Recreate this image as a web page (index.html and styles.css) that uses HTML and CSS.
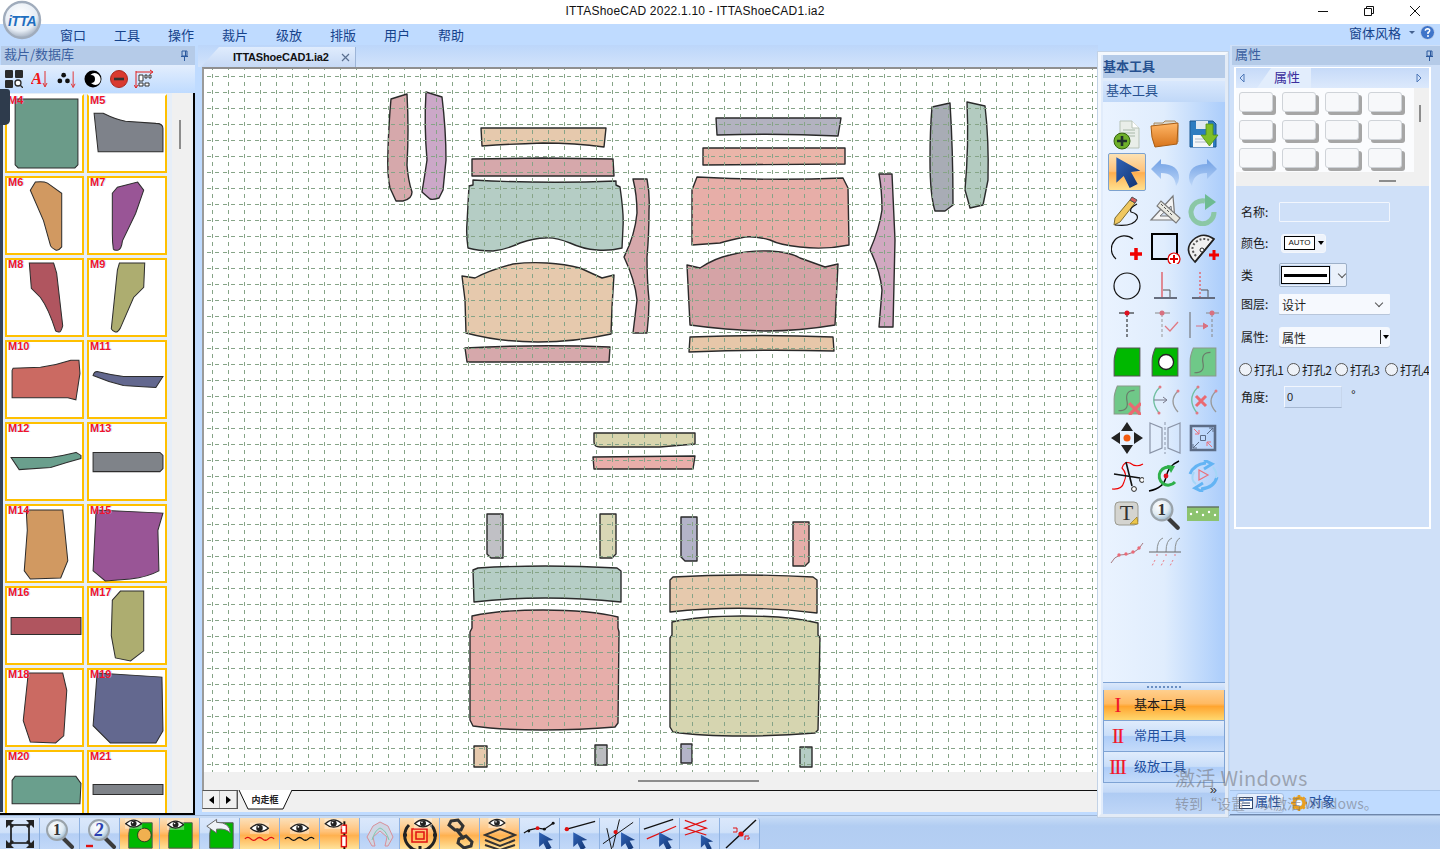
FILE: index.html
```html
<!DOCTYPE html>
<html lang="zh">
<head>
<meta charset="utf-8">
<title>ITTAShoeCAD</title>
<link rel="stylesheet" href="styles.css">
</head>
<body>
<svg class="defs" width="0" height="0">
  <defs>
    <linearGradient id="blueCur" x1="0" y1="0" x2="1" y2="1"><stop offset="0" stop-color="#2f63b8"/><stop offset="1" stop-color="#12336f"/></linearGradient>
    <radialGradient id="lens" cx=".4" cy=".35" r=".7"><stop offset="0" stop-color="#fff"/><stop offset=".6" stop-color="#dfeaf2"/><stop offset="1" stop-color="#8fb0c8"/></radialGradient>
    <radialGradient id="logoG" cx=".45" cy=".35" r=".7"><stop offset="0" stop-color="#fff"/><stop offset=".65" stop-color="#e6edf5"/><stop offset="1" stop-color="#8e9cb0"/></radialGradient>
    <linearGradient id="fold" x1="0" y1="0" x2="0" y2="1"><stop offset="0" stop-color="#ffb768"/><stop offset="1" stop-color="#d8741a"/></linearGradient>
    <linearGradient id="undoG" x1="0" y1="0" x2="0" y2="1"><stop offset="0" stop-color="#6f9fe4"/><stop offset="1" stop-color="#bcd6f8"/></linearGradient>
    <symbol id="eye" viewBox="0 0 24 14"><rect x="0" y="0" width="24" height="14" fill="#fff" opacity=".35"/><path d="M1 7Q12-3 23 7Q12 16 1 7Z" fill="#fff" stroke="#222" stroke-width="1.6"/><circle cx="12" cy="6.8" r="4" fill="#222"/><circle cx="10.6" cy="5.4" r="1.1" fill="#fff"/></symbol>
    <symbol id="cur" viewBox="0 0 20 24"><path d="M2 1V20L7.500 15 12 24 18 21 13 12 20 11Z" fill="url(#blueCur)"/></symbol>
    <symbol id="glass" viewBox="0 0 32 32"><path d="M19 20L28 29" stroke="#3b3b3b" stroke-width="4" stroke-linecap="round"/><circle cx="13" cy="12" r="10" fill="url(#lens)" stroke="#9aa3aa" stroke-width="2"/></symbol>
    <symbol id="gshape" viewBox="0 0 26 28"><path d="M4 1H25V27H1V13Q1 8 4 1Z" fill="#00b800" stroke="#555" stroke-width="1"/></symbol>
  </defs>
</svg>

<div class="app">
  <header class="titlebar">
    <div class="title">ITTAShoeCAD 2022.1.10 - ITTAShoeCAD1.ia2</div>
    <div class="winbtns">
      <svg width="12" height="12" viewBox="0 0 12 12"><path d="M1 6.500H11" stroke="#111"/></svg>
      <svg width="12" height="12" viewBox="0 0 12 12"><path d="M1.500 3.500H8.500V10.500H1.500ZM3.500 3.500V1.500H10.500V8.500H8.500" fill="none" stroke="#111"/></svg>
      <svg width="12" height="12" viewBox="0 0 12 12"><path d="M1 1L11 11M11 1L1 11" stroke="#111"/></svg>
    </div>
  </header>

  <nav class="menubar">
    <span>窗口</span><span>工具</span><span>操作</span><span>裁片</span><span>级放</span><span>排版</span><span>用户</span><span>帮助</span>
    <div class="menuright">
      <em>窗体风格</em><i class="caret"></i>
      <svg class="helpicon" width="15" height="15" viewBox="0 0 15 15"><circle cx="7.500" cy="7.500" r="7" fill="#3f74c9" stroke="#c9d8ee"/><path d="M5.300 5.800Q5.500 3.700 7.600 3.700Q9.800 3.800 9.700 5.600Q9.600 6.800 8 7.500V9" fill="none" stroke="#fff" stroke-width="1.500"/><circle cx="8" cy="11" r="1" fill="#fff"/></svg>
    </div>
  </nav>

  <main class="workspace">
    <aside class="left">
      <div class="panelhead"><span>裁片/数据库</span>
        <svg class="pin" width="9" height="11" viewBox="0 0 9 11"><path d="M2 1H7V6H2ZM1 6.500H8M4.500 7V11M5.500 1V6" fill="none" stroke="#2d5a9e"/></svg>
      </div>
      <div class="lefttools">
        <svg width="18" height="18" viewBox="0 0 18 18"><rect x="0" y="0" width="8" height="8" rx="1" fill="#2b2b2b"/><rect x="10" y="0" width="8" height="8" rx="1" fill="#2b2b2b"/><rect x="0" y="10" width="8" height="8" rx="1" fill="#2b2b2b"/><circle cx="13" cy="13" r="3" fill="#fff" stroke="#2b2b2b" stroke-width="1.300"/><path d="M15 15L18 18" stroke="#2b2b2b" stroke-width="1.300"/></svg>
        <svg width="18" height="18" viewBox="0 0 18 18"><text x="0" y="14" class="redA">A</text><path d="M14 1V16M12 13L14 17L16 13" fill="none" stroke="#e03030"/></svg>
        <svg width="19" height="18" viewBox="0 0 20 18"><circle cx="7" cy="5" r="2.500" fill="#111"/><circle cx="3" cy="11" r="2.500" fill="#111"/><circle cx="11" cy="11" r="2.500" fill="#111"/><path d="M17 1V17M15 14L17 18L19 14" fill="none" stroke="#e03030"/></svg>
        <svg width="18" height="18" viewBox="0 0 18 18"><circle cx="9" cy="9" r="8.500" fill="#000"/><ellipse cx="11" cy="9" rx="5.500" ry="6" fill="#fff" transform="rotate(-25 11 9)"/><circle cx="7" cy="9" r="4" fill="#000"/></svg>
        <svg width="18" height="18" viewBox="0 0 18 18"><circle cx="9" cy="9" r="8.500" fill="#d93a30" stroke="#a92a22"/><path d="M4 9H14" stroke="#333" stroke-width="2.600"/></svg>
        <svg class="lastool" width="20" height="20" viewBox="0 0 20 20"><path d="M2 3H18M16 1L19 3L16 5M2 2V19M0 16L2 19L4 16" fill="none" stroke="#e02020"/><path d="M5 6H9V12H5ZM11 6H13V9H11ZM15 6H17V9H15ZM5 14H9V17H5ZM11 14H15V17H11Z" fill="#fff" stroke="#333"/></svg>
      </div>
      <div class="listwrap">
        <div class="thumbs">
          <div class="thumb first"><b>M4</b><svg viewBox="0 0 78 78"><path class="sh" fill="#6b9b89" d="M10 5H72V70L69 73H13L10 70Z"/></svg></div>
          <div class="thumb first"><b>M5</b><svg viewBox="0 0 78 78"><path class="sh" fill="#7e828a" d="M7 19H16Q28 25 38 27L68 29Q75 29 75 34V57H11Z"/></svg></div>
          <div class="thumb"><b>M6</b><svg viewBox="0 0 78 78"><path class="sh" fill="#d19961" d="M25 14L30 6Q38 5 42 7L56 17V70Q53 74 50 73Q46 71 45 69L38 44Z"/></svg></div>
          <div class="thumb"><b>M7</b><svg viewBox="0 0 78 78"><path class="sh" fill="#995596" d="M25 17L30 11L50 6L56 14L48 37L35 64Q34 72 31 73Q27 74 26 72Q25 65 25 57Z"/></svg></div>
          <div class="thumb"><b>M8</b><svg viewBox="0 0 78 78"><path class="sh" fill="#b0555f" d="M24 5H48L51 15L57 67Q55 74 53 73Q51 73 50 72Q43 50 35 39L26 30Z"/></svg></div>
          <div class="thumb"><b>M9</b><svg viewBox="0 0 78 78"><path class="sh" fill="#adad70" d="M32 5H57L56 29L46 39L33 69Q30 74 28 73Q25 72 24 70L30 12Z"/></svg></div>
          <div class="thumb"><b>M10</b><svg viewBox="0 0 78 78"><path class="sh" fill="#cb6a62" d="M7 30L8 28L35 27Q50 25 65 20H73L74 33L70 59L62 57H7Z"/></svg></div>
          <div class="thumb"><b>M11</b><svg viewBox="0 0 78 78"><path class="sh" fill="#63688f" d="M6 35Q7 31 10 31Q22 34 36 36L75 36L68 47Q50 46 36 45Q20 41 6 35Z"/></svg></div>
          <div class="thumb"><b>M12</b><svg viewBox="0 0 78 78"><path class="sh" fill="#6a9f8d" d="M6 35H45Q58 33 70 30L75 33V36Q60 40 45 45L14 47Z"/></svg></div>
          <div class="thumb"><b>M13</b><svg viewBox="0 0 78 78"><path class="sh" fill="#7f8389" d="M6 30H72L75 33V46L72 49H6Z"/></svg></div>
          <div class="thumb"><b>M14</b><svg viewBox="0 0 78 78"><path class="sh" fill="#d19961" d="M21 6H57L62 56L55 73L25 74L19 66L22 26Z"/></svg></div>
          <div class="thumb"><b>M15</b><svg viewBox="0 0 78 78"><path class="sh" fill="#995596" d="M9 6L75 9L70 26L71 66Q60 72 43 74L18 76L6 66Z"/></svg></div>
          <div class="thumb"><b>M16</b><svg viewBox="0 0 78 78"><path class="sh" fill="#b0555f" d="M6 31H75V48H6Z"/></svg></div>
          <div class="thumb"><b>M17</b><svg viewBox="0 0 78 78"><path class="sh" fill="#adad70" d="M25 14L33 5H56V64L43 74L28 71L24 49Z"/></svg></div>
          <div class="thumb"><b>M18</b><svg viewBox="0 0 78 78"><path class="sh" fill="#cb6a62" d="M23 5H57L61 22L58 67L50 74L25 73L18 52Z"/></svg></div>
          <div class="thumb"><b>M19</b><svg viewBox="0 0 78 78"><path class="sh" fill="#63688f" d="M10 5L74 9L75 62L68 74H23L6 57Z"/></svg></div>
          <div class="thumb"><b>M20</b><svg viewBox="0 0 78 78"><path class="sh" fill="#6a9f8d" d="M7 30L10 26H70L75 33L74 53H7Z"/></svg></div>
          <div class="thumb"><b>M21</b><svg viewBox="0 0 78 78"><path class="sh" fill="#7f8389" d="M6 34H75V44H6Z"/></svg></div>
        </div>
        <div class="vscroll"><i></i></div>
      </div>
    </aside>

    <section class="doc">
      <div class="tabstrip">
        <div class="doctab"><span>ITTAShoeCAD1.ia2</span>
          <svg width="9" height="9" viewBox="0 0 9 9"><path d="M1 1L8 8M8 1L1 8" stroke="#5a6f90" stroke-width="1.200"/></svg>
        </div>
      </div>
      <div class="frame">
        <svg class="canvas" width="894" height="703" viewBox="204 69 894 703">
          <defs>
            <pattern id="grid" x="212" y="76" width="16" height="16" patternUnits="userSpaceOnUse">
              <path d="M.5 0V2M.5 6V10M.5 14V16" stroke="#86a487" fill="none"/>
              <path d="M3 .5H7M11 .5H15" stroke="#86a487" fill="none"/>
            </pattern>
          </defs>
          <rect x="204" y="69" width="894" height="703" fill="#fff"/>
          <g class="pc">
            <path fill="#d6a8ab" d="M391 99L407 94Q409 130 407 165Q408 180 412 192Q412 199 403 201H396L390 188Q387 175 388 150Q389 120 391 99Z"/>
            <path fill="#cba8c8" d="M426 92L442 97Q446 130 446 160L443 190L439 198Q433 200 430 199L422 192Q424 180 427 160Q424 125 426 92Z"/>
            <path fill="#e6c9ad" d="M481 128H606L604 147Q575 143 543 143Q510 144 482 146Z"/>
            <path fill="#d6a8ab" d="M472 159L543 158L613 159L614 176H472Z"/>
            <path fill="#b5cdc5" d="M473 180Q545 184 616 181V185L620 187Q624 215 623 227L622 248Q610 251 597 250Q583 249 570 243Q555 237 545 238Q535 238 520 243Q505 250 493 251Q478 251 468 248Q466 235 467 223L469 186L473 185Z"/>
            <path fill="#e6c9ad" d="M462 276L475 278Q490 270 513 264Q530 262 547 263Q565 264 580 268L602 278L614 275L612 307L611 334Q575 342 538 342Q500 342 466 333L465 300Z"/>
            <path fill="#d6a8ab" d="M465 348Q538 344 610 347L609 362H467Z"/>
            <path fill="#d6a8ab" d="M633 179H647Q650 195 649 210Q649 235 647 257Q647 280 649 300Q649 316 647 333H633L637 300Q635 280 624 257Q635 235 637 213Q637 195 633 179Z"/>
            <path fill="#b3b2c0" d="M716 118H841L838 136Q778 133 717 135Z"/>
            <path fill="#eab5a9" d="M703 148H845V164L703 165Z"/>
            <path fill="#e7aea8" d="M697 177Q770 181 843 178L848 188L849 245Q825 250 800 247Q780 245 770 240Q755 236 745 237Q730 240 720 243L692 245V190Z"/>
            <path fill="#d5a3a6" d="M687 265L700 268Q715 258 730 255Q750 250 770 251Q790 252 800 258L825 267L838 264L835 325Q800 331 765 331Q725 330 690 325Z"/>
            <path fill="#e7c7a9" d="M690 337Q762 334 833 337L834 351Q760 349 689 352Z"/>
            <path fill="#d0a8c0" d="M879 174H892L895 240L893 327H879L882 290Q880 270 870 250Q879 230 882 210Q882 190 879 174Z"/>
            <path fill="#a8acb5" d="M932 107L950 103Q953 150 953 205L945 211H935Q930 195 930 160Q930 130 932 107Z"/>
            <path fill="#b3cbc0" d="M967 102L985 106Q989 140 988 180L983 205L970 208Q968 200 965 190Q969 145 967 102Z"/>
            <path fill="#d9d5ae" d="M594 433H695V444L660 447H600Q594 447 594 442Z"/>
            <path fill="#e9aeaa" d="M593 457L695 456L693 469H594Z"/>
            <path fill="#c0c0c5" d="M487 514H503V558H491L487 554Z"/>
            <path fill="#d9d7b5" d="M600 514H616V554L612 558H600Z"/>
            <path fill="#b3b3c8" d="M681 517H697V561H685L681 557Z"/>
            <path fill="#e6aeaa" d="M793 522H809V562L805 566H793Z"/>
            <path fill="#b5cdc5" d="M473 570L478 568Q543 564 617 568L621 571V602Q543 594 474 602Z"/>
            <path fill="#e6aeaa" d="M472 616Q500 610 543 610Q590 610 618 617V628L619 632L618 723L615 727Q580 730 543 730Q500 730 473 726L470 720V632L472 628Z"/>
            <path fill="#e6c9ad" d="M670 580L673 577Q743 573 813 577L817 580V613Q743 604 670 612Z"/>
            <path fill="#d6d5b0" d="M672 622Q700 616 743 616Q790 616 818 623V635L820 638L818 730L815 733Q780 736 743 736Q700 736 673 732L670 727V638L672 635Z"/>
            <path fill="#e6c9ad" d="M474 746H487V767H474Z"/>
            <path fill="#bbbcc0" d="M595 745H607V765H595Z"/>
            <path fill="#b3b3c8" d="M681 744H692V763H681Z"/>
            <path fill="#b5cdc5" d="M800 747H812V767H800Z"/>
          </g>
          <rect x="204" y="69" width="894" height="703" fill="url(#grid)"/>
        </svg>
        <div class="hstrip"><i></i></div>
      </div>
      <div class="sheetrow">
        <div class="navbtns">
          <button class="nav"><i class="tri-l"></i></button>
          <button class="nav"><i class="tri-r"></i></button>
        </div>
        <div class="sheettab">
          <svg class="tabshape" width="54" height="20" viewBox="0 0 54 20"><path d="M1 0L10 19H45L54 0" fill="#fff" stroke="#111"/></svg>
          <span>内走框</span>
        </div>
        <div class="sheetline"></div>
      </div>
    </section>

    <aside class="tools">
      <div class="toolhead">基本工具</div>
      <div class="toolsub">基本工具</div>
      <div class="toolgrid">
        <!-- row 1 -->
        <div class="tc"><svg width="32" height="32" viewBox="0 0 32 32"><path d="M9 3H21L28 10V30H9Z" fill="#e9eee9" stroke="#b7c3b7"/><path d="M21 3V10H28" fill="#fff" stroke="#b7c3b7"/><path d="M12 12H24M12 15H24M15 18H24" stroke="#a8b8a8"/><circle cx="11" cy="23" r="8" fill="#6fb02a" stroke="#34620f"/><path d="M11 18V28M6 23H16" stroke="#20302a" stroke-width="2.600"/></svg></div>
        <div class="tc"><svg width="32" height="32" viewBox="0 0 32 32"><path d="M5 5H14L16 3H26L29 7V24H5Z" fill="#d8d8d0" stroke="#a98a60"/><path d="M2 8L29 5L28 26L6 29Q2 20 2 8Z" fill="url(#fold)" stroke="#a85d16"/></svg></div>
        <div class="tc"><svg width="32" height="32" viewBox="0 0 32 32"><path d="M3 3H26L29 6V29H3Z" fill="#2d7cc0" stroke="#1b578f"/><path d="M9 3H21V11H9Z" fill="#dfe8f2"/><path d="M6 17H26V29H6Z" fill="#f4f6f8"/><path d="M8 21H24M8 24H24" stroke="#b0bcc8"/><path d="M19 6H26V17H31L22.500 28L14 17H19Z" fill="#7fbf28" stroke="#4e8f15" stroke-width=".8"/></svg></div>
        <!-- row 2 -->
        <div class="tc sel"><svg width="28" height="32" viewBox="0 0 20 24"><use href="#cur"/></svg></div>
        <div class="tc"><svg width="32" height="32" viewBox="0 0 32 32"><path d="M2 13L12 3V8Q30 8 30 22Q30 26 27 30Q26 17 12 17V23Z" fill="url(#undoG)"/></svg></div>
        <div class="tc"><svg width="32" height="32" viewBox="0 0 32 32"><path d="M30 13L20 3V8Q2 8 2 22Q2 26 5 30Q6 17 20 17V23Z" fill="url(#undoG)"/></svg></div>
        <!-- row 3 -->
        <div class="tc"><svg width="32" height="32" viewBox="0 0 32 32"><path d="M19 6L24 9L9 28L3 31L4 24Z" fill="#f0c860" stroke="#7a6a30"/><path d="M19 6L24 9L26 6L21 3Z" fill="#d85a5a" stroke="#555"/><path d="M4 31Q22 33 26 25Q28 20 20 18Q18 14 26 10" fill="none" stroke="#111" stroke-width="1.200"/></svg></div>
        <div class="tc"><svg width="32" height="32" viewBox="0 0 32 32"><path d="M24 2L26 26H2Z" fill="#f4f4f4" stroke="#777" stroke-width="1.200"/><path d="M22 12L23 22H11Z" fill="#d6e4f6" stroke="#777"/><path d="M8 12L12 7L31 24L27 29Z" fill="#e8e8e0" stroke="#777" stroke-width="1.200"/><path d="M12 10L14 12M15 13L17 15M18 16L20 18M21 19L23 21" stroke="#555"/></svg></div>
        <div class="tc"><svg width="32" height="32" viewBox="0 0 32 32"><path d="M18 7A11.500 11.500 0 1 0 27 18" fill="none" stroke="#8bc7a6" stroke-width="5"/><path d="M18 0L29 8L18 16Z" fill="#6dbb92"/></svg></div>
        <!-- row 4 -->
        <div class="tc"><svg width="32" height="32" viewBox="0 0 32 32"><path d="M7 27A12 12 0 1 1 24 7" fill="none" stroke="#111" stroke-width="1.200" transform="translate(-2 0)"/><path d="M19 22H31M25 16V28" stroke="#f00000" stroke-width="3.500"/></svg></div>
        <div class="tc"><svg width="32" height="32" viewBox="0 0 32 32"><path d="M3 2H28V27H3Z" fill="none" stroke="#000" stroke-width="2"/><circle cx="25" cy="27" r="6" fill="#fff" stroke="#e00000" stroke-width="1.200"/><path d="M25 23V31M21 27H29" stroke="#e00000" stroke-width="2"/></svg></div>
        <div class="tc"><svg width="32" height="32" viewBox="0 0 32 32"><path d="M8 30Q-4 18 6 8Q16-1 27 7Z" fill="#f0f0f0" stroke="#222" stroke-width="1.600"/><path d="M8 30L27 7" stroke="#222" stroke-width="1.600"/><path d="M9 24Q2 16 9 10Q15 5 22 8" fill="none" stroke="#555" stroke-dasharray="2 2" stroke-width="2"/><circle cx="15" cy="18" r="2" fill="#fff" stroke="#222"/><path d="M22 23H33M27 18V28" stroke="#f00000" stroke-width="3"/></svg></div>
        <!-- row 5 -->
        <div class="tc"><svg width="32" height="32" viewBox="0 0 32 32"><circle cx="16" cy="16" r="13" fill="none" stroke="#111" stroke-width="1.200"/></svg></div>
        <div class="tc"><svg width="32" height="32" viewBox="0 0 32 32"><path d="M13 2V27" stroke="#e0707a" stroke-width="1.600"/><path d="M5 28H28" stroke="#5a5f70" stroke-width="1.800"/><path d="M14 20H21V27" fill="none" stroke="#555"/></svg></div>
        <div class="tc"><svg width="32" height="32" viewBox="0 0 32 32"><path d="M13 2V27" stroke="#e0707a" stroke-width="1.600" stroke-dasharray="2 2"/><path d="M5 28H28" stroke="#5a5f70" stroke-width="1.800"/><path d="M14 20H21V27" fill="none" stroke="#555"/></svg></div>
        <!-- row 6 -->
        <div class="tc"><svg width="32" height="32" viewBox="0 0 32 32"><path d="M8 5H23" stroke="#111"/><path d="M16 6V30" stroke="#111" stroke-dasharray="3 2"/><circle cx="16" cy="5" r="2.500" fill="#e01020"/></svg></div>
        <div class="tc"><svg width="32" height="32" viewBox="0 0 32 32"><path d="M6 5H21" stroke="#888"/><path d="M13 6V30" stroke="#999" stroke-dasharray="3 2"/><circle cx="13" cy="5" r="2.500" fill="#d87080"/><path d="M16 18L21 23L29 14" fill="none" stroke="#e07a84" stroke-width="1.300"/></svg></div>
        <div class="tc"><svg width="32" height="32" viewBox="0 0 32 32"><path d="M3 4V30" stroke="#666"/><path d="M19 5H32" stroke="#888"/><path d="M25 6V30" stroke="#888" stroke-dasharray="3 2"/><circle cx="25" cy="5" r="2.500" fill="#d87080"/><path d="M9 18H20M16 15L21 18L16 21" fill="#d87080" stroke="#d87080"/></svg></div>
        <!-- row 7 -->
        <div class="tc"><svg width="28" height="30" viewBox="0 0 26 28"><use href="#gshape"/></svg></div>
        <div class="tc"><svg width="28" height="30" viewBox="0 0 26 28"><use href="#gshape"/><circle cx="14" cy="14" r="7" fill="#fff" stroke="#222" stroke-width="1.200"/></svg></div>
        <div class="tc"><svg width="28" height="30" viewBox="0 0 26 28"><path d="M4 1H25V27H1V13Q1 8 4 1Z" fill="#6fc888" stroke="#8a9a8a"/><path d="M5 24Q15 24 13 15Q11 5 20 5" fill="none" stroke="#6a7a6a" stroke-width="1.100"/></svg></div>
        <!-- row 8 -->
        <div class="tc"><svg width="28" height="30" viewBox="0 0 26 28"><path d="M4 1H25V27H1V13Q1 8 4 1Z" fill="#6fc888" stroke="#8a9a8a"/><path d="M5 24Q15 24 13 15Q11 5 20 5" fill="none" stroke="#6a7a6a" stroke-width="1.100"/><path d="M15 17L26 28M26 17L15 28" stroke="#ea6a72" stroke-width="3"/></svg></div>
        <div class="tc"><svg width="32" height="32" viewBox="0 0 32 32"><path d="M11 3Q-1 15 10 29" fill="none" stroke="#70bfa0" stroke-width="1.300"/><path d="M29 7Q19 17 29 28" fill="none" stroke="#999" stroke-width="1.300"/><circle cx="11" cy="3" r="1.500" fill="#e07a84"/><circle cx="10" cy="29" r="1.500" fill="#e07a84"/><circle cx="29" cy="7" r="1.500" fill="#e07a84"/><path d="M5 16H17M14 13L18 16L14 19" fill="none" stroke="#778"/></svg></div>
        <div class="tc"><svg width="32" height="32" viewBox="0 0 32 32"><path d="M11 3Q-1 15 10 29" fill="none" stroke="#70bfa0" stroke-width="1.300"/><path d="M29 7Q19 17 29 28" fill="none" stroke="#999" stroke-width="1.300"/><circle cx="11" cy="3" r="1.500" fill="#e07a84"/><circle cx="10" cy="29" r="1.500" fill="#e07a84"/><circle cx="29" cy="7" r="1.500" fill="#e07a84"/><path d="M9 12L19 22M19 12L9 22" stroke="#ea6a72" stroke-width="3"/></svg></div>
        <!-- row 9 -->
        <div class="tc"><svg width="32" height="32" viewBox="0 0 32 32"><path d="M16 0L22 9H10ZM16 32L22 23H10ZM0 16L9 10V22ZM32 16L23 10V22Z" fill="#222"/><circle cx="16" cy="16" r="3.500" fill="#f25a10"/></svg></div>
        <div class="tc"><svg width="32" height="32" viewBox="0 0 32 32"><path d="M1 1L13 6V26L1 31ZM31 1L19 6V26L31 31Z" fill="none" stroke="#8b95a8" stroke-width="1.200"/><path d="M16 0V32" stroke="#8b95a8" stroke-dasharray="3 2"/></svg></div>
        <div class="tc"><svg width="32" height="32" viewBox="0 0 32 32"><path d="M4 4H28V28H4Z" fill="none" stroke="#5c6c86" stroke-width="2.600"/><path d="M13.500 13.500H18.500V18.500H13.500Z" fill="none" stroke="#5c6c86"/><path d="M20 12L26 6M22 6H26V10M12 20L6 26M6 22V26H10" fill="none" stroke="#5c6c86"/><path d="M12 12L7 7M12 8V12H8M20 20L25 25M20 24V20H24" fill="none" stroke="#e9717c"/></svg></div>
        <!-- row 10 -->
        <div class="tc"><svg width="34" height="32" viewBox="0 0 34 32"><path d="M2 29Q12 30 14 22Q18 14 12 8Q14 1 20 3Q26 8 33 4" fill="none" stroke="#ee0000" stroke-width="1.100"/><path d="M16 2L22 26M30 18L4 14" stroke="#111" stroke-width="1.600"/><circle cx="24" cy="29" r="2.400" fill="#fff" stroke="#222"/><circle cx="32" cy="20" r="2.400" fill="#fff" stroke="#222"/></svg></div>
        <div class="tc"><svg width="34" height="32" viewBox="0 0 34 32"><path d="M1 31Q16 28 18 17Q20 6 31 1" fill="none" stroke="#000" stroke-width="1.400"/><path d="M24 8A9 9 0 1 0 27 22" fill="none" stroke="#2fb04a" stroke-width="3"/><path d="M19 5L27 6L23 13Z" fill="#2fb04a"/><circle cx="18" cy="16" r="2.400" fill="#e01020"/></svg></div>
        <div class="tc"><svg width="34" height="32" viewBox="0 0 34 32"><path d="M4 14Q8 4 20 3M18 0L26 4L18 9M31 17Q28 28 15 29M17 32L9 28L17 23" fill="none" stroke="#63b4f4" stroke-width="3"/><path d="M8 12Q4 20 10 24M27 7Q32 13 30 18" fill="none" stroke="#a5d6f7" stroke-width="2"/><path d="M13 10L22 15L13 20Z" fill="none" stroke="#e9717c" stroke-width="1.200"/></svg></div>
        <!-- row 11 -->
        <div class="tc"><svg width="28" height="28" viewBox="0 0 28 28"><rect x="2" y="2" width="23" height="23" rx="4" fill="#d4d4d0" stroke="#9a9a90"/><text x="13.500" y="20" class="serifT">T</text><path d="M17 24L24 17L25 24Z" fill="#ecc64a" stroke="#9a7a20" stroke-width=".7"/></svg></div>
        <div class="tc"><svg width="34" height="34" viewBox="0 0 32 32"><use href="#glass"/><text x="13" y="17" class="digit">1</text></svg></div>
        <div class="tc"><svg width="32" height="16" viewBox="0 0 32 16"><rect y="1" width="32" height="14" fill="#8cc36f"/><path d="M0 1H32" stroke="#5f6f5f" stroke-width="1.400"/><circle cx="4" cy="8" r="1.200" fill="#fff"/><circle cx="10" cy="6" r="1.200" fill="#fff"/><circle cx="16" cy="9" r="1.200" fill="#fff"/><circle cx="22" cy="6" r="1.200" fill="#fff"/><circle cx="28" cy="9" r="1.200" fill="#fff"/></svg></div>
        <!-- row 12 -->
        <div class="tc"><svg width="34" height="24" viewBox="0 0 34 24"><path d="M1 23Q4 17 10 15Q18 15 24 12Q29 10 33 3" fill="none" stroke="#a87a80"/><circle cx="9" cy="15" r="1.700" fill="#ea6a78"/><circle cx="16" cy="14" r="1.700" fill="#ea6a78"/><circle cx="23" cy="12" r="1.700" fill="#ea6a78"/><circle cx="29" cy="8" r="1.700" fill="#ea6a78"/></svg></div>
        <div class="tc"><svg width="32" height="32" viewBox="0 0 32 32"><path d="M8 16Q8 4 14 2M17 16Q17 4 23 2M26 16Q26 4 31 2" fill="none" stroke="#8a8f90"/><path d="M0 16H32" stroke="#666"/><path d="M8 18V21M6 24L3 30M17 18V21M15 24L12 30M26 18V21M24 24L21 30" stroke="#ea7a84" stroke-dasharray="2 2"/></svg></div>
      </div>
      <div class="grip"></div>
      <div class="stackbtn on"><i>I</i><span>基本工具</span></div>
      <div class="stackbtn"><i>II</i><span>常用工具</span></div>
      <div class="stackbtn"><i>III</i><span>级放工具</span></div>
      <div class="toolfoot"><em>»</em></div>
    </aside>

    <aside class="props">
      <div class="panelhead"><span>属性</span>
        <svg class="pin" width="9" height="11" viewBox="0 0 9 11"><path d="M2 1H7V6H2ZM1 6.500H8M4.500 7V11M5.500 1V6" fill="none" stroke="#2d5a9e"/></svg>
      </div>
      <div class="propbox">
        <div class="proptabs">
          <svg width="6" height="10" viewBox="0 0 6 10"><path d="M5 1V9L1 5Z" fill="none" stroke="#4f78b8"/></svg>
          <div class="proptab">属性</div>
          <svg width="6" height="10" viewBox="0 0 6 10"><path d="M1 1V9L5 5Z" fill="none" stroke="#4f78b8"/></svg>
        </div>
        <div class="swatches">
          <div class="swgrid">
            <i></i><i></i><i></i><i></i>
            <i></i><i></i><i></i><i></i>
            <i></i><i></i><i></i><i></i>
          </div>
          <div class="swv"><u></u></div>
          <div class="swh"><u></u></div>
        </div>
        <form class="form">
          <div class="row r1"><label>名称:</label><div class="inp w111"></div></div>
          <div class="row r2"><label>颜色:</label><div class="colorbtn"><span>AUTO</span><i></i></div></div>
          <div class="row r3"><label>类</label><div class="linebtn"><span><b></b></span><i></i></div></div>
          <div class="row r4"><label>图层:</label><div class="sel1"><span>设计</span><i></i></div></div>
          <div class="row r5"><label>属性:</label><div class="sel2"><span>属性</span><i></i></div></div>
          <div class="radios">
            <label class="rd"><i></i><span>打孔1</span></label>
            <label class="rd"><i></i><span>打孔2</span></label>
            <label class="rd"><i></i><span>打孔3</span></label>
            <label class="rd"><i></i><span>打孔4</span></label>
          </div>
          <div class="row r6"><label>角度:</label><div class="angle">0</div><sup>°</sup></div>
        </form>
      </div>
      <div class="propfill"></div>
      <div class="proptabsb">
        <div class="ptb act"><svg width="14" height="12" viewBox="0 0 14 12"><rect x=".5" y=".5" width="13" height="11" fill="#fff" stroke="#33476b"/><path d="M1 3H13" stroke="#4a78c0" stroke-width="2"/><path d="M3 6H11M3 8.500H11" stroke="#33476b"/></svg><span>属性</span></div>
        <div class="ptb"><svg width="16" height="16" viewBox="0 0 16 16"><circle cx="8" cy="8" r="5" fill="none" stroke="#e8a020" stroke-width="3.500"/><path d="M8 0V3M8 13V16M0 8H3M13 8H16M2.300 2.300L4.500 4.500M11.500 11.500L13.700 13.700M13.700 2.300L11.500 4.500M4.500 11.500L2.300 13.700" stroke="#e8a020" stroke-width="2.600"/><circle cx="8" cy="8" r="2.500" fill="#fff"/></svg><span>对象</span></div>
      </div>
    </aside>
  </main>

  <footer class="bottombar">
    <div class="b"><svg width="30" height="30" viewBox="0 0 30 30"><path d="M6 6H24V24H6Z" fill="none" stroke="#111" stroke-width="1.600"/><path d="M1 1H9L6 4L9 7L7 9L4 6L1 9ZM29 1H21L24 4L21 7L23 9L26 6L29 9ZM1 29H9L6 26L9 23L7 21L4 24L1 21ZM29 29H21L24 26L21 23L23 21L26 24L29 21Z" fill="#222"/></svg></div>
    <div class="b"><svg width="32" height="32" viewBox="0 0 32 32"><use href="#glass"/><text x="13" y="17" class="digit">1</text></svg></div>
    <div class="b"><svg width="34" height="32" viewBox="0 0 34 32"><g transform="translate(3 0)"><use href="#glass" width="32" height="32"/></g><text x="16" y="18" class="digit2">2</text><path d="M3 28H10" stroke="#e01010" stroke-width="2.400"/></svg></div>
    <div class="b o"><svg width="40" height="32" viewBox="0 0 40 32"><use href="#gshape" x="8" y="3" width="26" height="29"/><circle cx="25" cy="17" r="7" fill="#f0b050" stroke="#222" stroke-width=".8"/><use href="#eye" x="5" y="0" width="18" height="11"/></svg></div>
    <div class="b o"><svg width="40" height="32" viewBox="0 0 40 32"><use href="#gshape" x="8" y="3" width="26" height="29"/><use href="#eye" x="7" y="1" width="18" height="11"/></svg></div>
    <div class="b"><svg width="40" height="32" viewBox="0 0 40 32"><use href="#gshape" x="9" y="3" width="26" height="29"/><path d="M7 8L17 1V4Q31 4 31 15Q27 10 17 11V15Z" fill="#eef3f8" stroke="#666"/></svg></div>
    <div class="b o"><svg width="40" height="32" viewBox="0 0 40 32"><use href="#eye" x="10" y="4" width="20" height="12"/><path d="M5 21Q8 18 11 21T17 21T23 21T29 21T35 21" fill="none" stroke="#e01010" stroke-width="1.400"/></svg></div>
    <div class="b o"><svg width="40" height="32" viewBox="0 0 40 32"><use href="#eye" x="10" y="4" width="20" height="12"/><path d="M5 21Q8 18 11 21T17 21T23 21T29 21T35 21" fill="none" stroke="#111" stroke-width="1.400"/></svg></div>
    <div class="b o"><svg width="40" height="32" viewBox="0 0 40 32"><path d="M25 3V33" stroke="#111" stroke-width="2"/><rect x="22" y="7" width="5" height="8" fill="#fff" stroke="#e01010" stroke-width="1.500"/><rect x="22" y="18" width="5" height="11" fill="#fff" stroke="#e01010" stroke-width="1.500"/><use href="#eye" x="4" y="0" width="20" height="11"/></svg></div>
    <div class="b"><svg width="32" height="30" viewBox="0 0 32 30"><path d="M3 18L9 7L16 3L24 7L29 18L24 27H21L23 18L16 12L9 18L11 27H8Z" fill="#cdd6e4" stroke="#d8909a"/><path d="M8 21Q11 11 16 9Q22 11 25 21" fill="none" stroke="#7ccab0"/></svg></div>
    <div class="b o"><svg width="34" height="33" viewBox="0 0 34 33"><path d="M6 28A15 15 0 0 1 6 7M28 28A15 15 0 0 0 28 7M6 28A15 15 0 0 0 28 28" fill="none" stroke="#222" stroke-width="3"/><path d="M0 17H4M30 17H34M17 28V33" stroke="#222" stroke-width="3"/><rect x="9" y="11" width="15" height="13" fill="none" stroke="#e01010" stroke-width="1.500"/><rect x="13" y="14" width="8" height="7" fill="none" stroke="#e01010" stroke-width="1.500"/><use href="#eye" x="11" y="0" width="18" height="11"/></svg></div>
    <div class="b o"><svg width="32" height="32" viewBox="0 0 32 32"><path d="M7 3L14 2L19 8L17 12L11 12L5 7ZM15 21L22 18L28 24L27 28L20 30L14 25Z" fill="none" stroke="#333" stroke-width="3"/><path d="M12 11L20 21" stroke="#333" stroke-width="3"/></svg></div>
    <div class="b o"><svg width="34" height="33" viewBox="0 0 34 33"><path d="M17 11L32 17L17 23L2 17ZM2 22L17 28L32 22M2 27L17 32L32 27" fill="none" stroke="#333" stroke-width="2"/><use href="#eye" x="5" y="0" width="18" height="10"/></svg></div>
    <div class="b"><svg width="40" height="33" viewBox="0 0 40 33"><path d="M4 15L9 12L18 10L25 11L34 5" fill="none" stroke="#111" stroke-width="1.200"/><circle cx="9" cy="13" r="1.500" fill="#111"/><circle cx="25" cy="11" r="1.500" fill="#111"/><circle cx="34" cy="5" r="1.500" fill="#111"/><circle cx="18" cy="10" r="2" fill="#e01010"/><use href="#cur" x="18" y="13" width="16" height="20"/></svg></div>
    <div class="b"><svg width="40" height="33" viewBox="0 0 40 33"><path d="M7 11L36 3" stroke="#111" stroke-width="1.200"/><circle cx="7" cy="11" r="2.200" fill="#e01010"/><use href="#cur" x="12" y="13" width="16" height="20"/></svg></div>
    <div class="b"><svg width="40" height="33" viewBox="0 0 40 33"><path d="M3 26L34 4M20 1L13 30M7 10L12 32" stroke="#111" stroke-width="1"/><circle cx="16" cy="14" r="2.200" fill="#e01010"/><use href="#cur" x="20" y="13" width="16" height="20"/></svg></div>
    <div class="b"><svg width="40" height="33" viewBox="0 0 40 33"><path d="M4 11L34 1" stroke="#111" stroke-width="1.200"/><path d="M7 21L37 8" stroke="#e01010" stroke-width="1.200"/><use href="#cur" x="18" y="13" width="16" height="20"/></svg></div>
    <div class="b"><svg width="40" height="33" viewBox="0 0 40 33"><path d="M5 2L27 10L5 17M27 2L5 10L27 17" fill="none" stroke="#e01010" stroke-width="1.200"/><use href="#cur" x="20" y="16" width="14" height="17"/></svg></div>
    <div class="b"><svg width="36" height="33" viewBox="0 0 36 33"><path d="M4 30L34 2" stroke="#111" stroke-width="1.400"/><circle cx="19" cy="16" r="2.600" fill="#e01010"/><path d="M11 10H15V14H11M23 22V18H27M26 22V20H28" fill="none" stroke="#e01010"/></svg></div>
  </footer>

  <div class="logo">
    <svg width="40" height="40" viewBox="0 0 40 40"><circle cx="20" cy="20" r="18" fill="url(#logoG)" stroke="#a0acbc" stroke-width="2.400"/><text x="20" y="25.500" class="logotext">iTTA</text></svg>
  </div>
  <div class="handle"></div>
  <div class="watermark"><p class="w1">激活 Windows</p><p class="w2">转到“设置”以激活 Windows。</p></div>
</div>
</body>
</html>
```

FILE: styles.css
```css
* { box-sizing: border-box; }
html, body { margin: 0; padding: 0; height: 100%; overflow: hidden; }
body { font-family: "Noto Sans CJK SC", "Liberation Sans", sans-serif; font-size: 13px; color: #15428b; background: #bfdbff; }
.defs { display: block; height: 0; }
.app { width: 1440px; height: 849px; display: flex; flex-direction: column; position: relative; overflow: hidden; }

/* title */
.titlebar { height: 24px; background: #fff; display: flex; align-items: center; justify-content: center; position: relative; flex: none; padding-right: 50px; }
.title { font: 12px "Liberation Sans", Arial, sans-serif; color: #111; letter-spacing: .22px; margin-top: -3px; }
.winbtns { position: absolute; right: 19px; top: 5px; display: flex; gap: 34px; }

/* menu */
.menubar { height: 21px; flex: none; background: #bfdbff; display: flex; align-items: center; padding-left: 60px; gap: 28px; line-height: 21px; position: relative; padding-bottom: 1px; }
.menubar > span { width: 26px; white-space: nowrap; }
.menuright { margin-left: auto; display: flex; align-items: center; padding-right: 5px; height: 21px; margin-top: -4px; }
.menuright em { font-style: normal; }
.caret { width: 0; height: 0; border: 3px solid transparent; border-top: 3px solid #44618f; border-bottom: 0; margin: 0 5px 0 8px; }

/* workspace */
.workspace { flex: 1; display: flex; min-height: 0; }
.left { width: 195px; flex: none; display: flex; flex-direction: column; padding-top: 1px; }
.panelhead { height: 19px; flex: none; margin-left: 1px; background: #b5cbe8; display: flex; align-items: center; justify-content: space-between; padding: 0 6px 4px 3px; color: #3a5fa0; line-height: 15px; font-size: 13px; }
.pin { flex: none; margin-top: 3px; }
.lefttools { height: 28px; flex: none; background: linear-gradient(#e3eefd, #bfdbff); display: flex; align-items: center; padding: 0 0 0 5px; gap: 8px; }
.lastool { margin-left: -2px; }
.redA { font: italic bold 17px "Liberation Serif", serif; fill: #f01818; }
.listwrap { flex: 1; min-height: 0; display: flex; border-right: 2px solid #000; border-bottom: 2px solid #000; background: #e6eef8; overflow: hidden; }
.thumbs { width: 167px; padding-left: 5px; margin-top: 1px; display: grid; grid-template-columns: 79px 80px; grid-auto-rows: 79px; row-gap: 3px; column-gap: 3px; align-content: start; flex: none; overflow: hidden; height: 720px; }
.thumb { border: 2px solid #ffc000; background: #fff; position: relative; }
.thumb.first { border-top-color: #fff; }
.thumb b { position: absolute; left: 1px; top: -2px; font: bold 11px/13px "Liberation Sans", Arial, sans-serif; color: #f0142c; text-shadow: 1px 0 0 rgba(120, 200, 255, .45); }
.thumb svg { display: block; margin: -2px; width: 79px; height: 79px; }
.sh { stroke: #2d2d2d; stroke-width: 1; }
.vscroll { width: 19px; margin-left: 5px; background: #f0f0f0; position: relative; flex: none; }
.vscroll i { display: block; width: 2px; height: 29px; background: #8c8c8c; margin: 27px 0 0 7px; }

/* doc */
.doc { width: 900px; flex: none; margin-left: 3px; display: flex; flex-direction: column; }
.tabstrip { height: 22px; flex: none; padding: 2px 0 0 3px; background: linear-gradient(#bcd6fa, #d2e3fb); }
.doctab { width: 155px; height: 20px; background: linear-gradient(#e0ecfd, #c6d9f5); clip-path: polygon(18px 0, 100% 0, 100% 100%, 0 100%); border-right: 1px solid #9db5d8; display: flex; align-items: center; padding-left: 32px; gap: 12px; }
.doctab span { font: bold 11px "Liberation Sans", Arial, sans-serif; color: #111; letter-spacing: -.2px; white-space: nowrap; }
.frame { flex: none; margin-left: 4px; border-left: 2px solid #9a9a9a; border-top: 2px solid #8f8f8f; background: #f0f0f0; }
.canvas { display: block; }
.pc path { stroke: #2a2a2a; stroke-width: 1.4; stroke-linejoin: round; }
.hstrip { height: 18px; background: #f0f0f0; display: flex; align-items: center; padding-left: 434px; padding-bottom: 1px; }
.hstrip i { display: block; width: 121px; height: 2px; background: #8c8c8c; }
.sheetrow { margin-left: 4px; height: 22px; display: flex; background: #f0f0f0; align-items: flex-start; }
.navbtns { display: flex; width: 36px; height: 19px; flex: none; border: 1px solid #555; border-left-color: #999; background: #f0f0f0; }
.nav { width: 18px; height: 17px; padding: 0; border: 0; border-right: 1px solid #aaa; background: #f0f0f0; display: flex; align-items: center; justify-content: center; }
.tri-l { border: 4px solid transparent; border-right: 5px solid #000; border-left: 0; }
.tri-r { border: 4px solid transparent; border-left: 5px solid #000; border-right: 0; }
.sheettab { width: 54px; height: 20px; flex: none; position: relative; font: bold 9px/19px "Noto Sans CJK SC", sans-serif; color: #222; text-align: center; }
.tabshape { position: absolute; left: 0; top: 0; }
.sheettab span { position: relative; }
.sheetline { flex: 1; height: 1px; background: #111; }

/* tools */
.tools { width: 130px; flex: none; margin: 7px 0 -2px 0; position: relative; z-index: 2; border: 3px solid #e3ebf6; border-top-color: #f4f8fd; border-left-color: #f4f8fd; background: #e1ecfb; display: flex; flex-direction: column; padding: 0 0 0 2px; box-shadow: 0 0 0 1px #c2d2e6; }
.toolhead { height: 23px; flex: none; background: #b5cbe8; font-size: 13px; font-weight: 700; line-height: 21px; color: #26508f; }
.toolsub { height: 21px; flex: none; margin-top: 3px; background: linear-gradient(#d9e8fd, #c0d8f8); line-height: 17px; padding-left: 3px; color: #26508f; }
.toolgrid { flex: 1; min-height: 0; background: linear-gradient(90deg, #eaf3ff 0, #e0edfd 50%, #abcdfb 100%); display: grid; grid-template-columns: repeat(3, 38px); grid-auto-rows: 38px; padding: 13px 0 0 5px; align-content: start; }
.tc { display: flex; align-items: center; justify-content: center; }
.sel { background: linear-gradient(#fce2b4 0, #ffc27a 48%, #ffae4e 52%, #ffe08f 100%); border: 1px solid #7da2ce; border-radius: 2px; }
.serifT { font: 22px "Liberation Serif", serif; fill: #333; text-anchor: middle; }
.digit { font: bold 16px "Liberation Serif", serif; fill: #333; text-anchor: middle; }
.digit2 { font: italic bold 18px "Liberation Serif", serif; fill: #2a3fb0; text-anchor: middle; }
.grip { height: 8px; flex: none; border-top: 1px solid #7ea3d4; background: linear-gradient(#dbe8fb, #c6dcf9); position: relative; }
.grip::after { content: ""; position: absolute; left: 44px; top: 3px; width: 36px; height: 2px; background: repeating-linear-gradient(90deg, #6a8ec0 0 2px, transparent 2px 4px); }
.stackbtn { height: 31px; flex: none; display: flex; align-items: center; border: 1px solid #7ea3d4; border-top: 0; background: linear-gradient(#e0ecfc 0, #c9def9 48%, #aecdf8 52%, #c4dbfa 100%); color: #1d4f9f; line-height: 26px; }
.stackbtn i { width: 26px; flex: none; font: normal 22px/24px "Liberation Serif", serif; color: #f0182c; text-align: center; letter-spacing: -2px; }
.stackbtn span { font-size: 13px; padding-bottom: 3px; margin-left: 4px; }
.stackbtn.on { background: linear-gradient(#ffcf8e 0, #ffba63 45%, #ffa530 55%, #ffd86f 100%); color: #1a1a1a; }
.toolfoot { height: 31px; flex: none; position: relative; background: linear-gradient(#d0e2fa 0, #c2d8f7 30%, #aecbf3 32%, #bfd6f7 100%); }
.toolfoot em { position: absolute; right: 8px; top: 0; font: normal 13px "Liberation Sans", sans-serif; color: #333; line-height: 13px; }

/* props */
.props { flex: 1; display: flex; flex-direction: column; padding: 1px 0 0 3px; background: #cfe0f8; min-width: 0; margin-left: 2px; }
.props .panelhead { margin-left: -1px; }
.propbox { margin: 2px 9px 0 1px; height: 462px; border: 2px solid #fff; border-top-width: 1px; flex: none; background: #cfe0f8; display: flex; flex-direction: column; }
.proptabs { height: 20px; flex: none; background: linear-gradient(#c6daf8, #dce9fc); display: flex; align-items: center; padding: 0 7px 0 3px; }
.proptab { width: 54px; height: 20px; margin-left: 12px; margin-right: auto; background: #e2edfc; clip-path: polygon(14px 0, 100% 0, 100% 100%, 0 100%); text-align: center; color: #3a2e9c; line-height: 17px; padding-left: 6px; }
.swatches { height: 98px; flex: none; position: relative; background: #f0f0f0; overflow: hidden; }
.swgrid { width: 178px; height: 84px; background: #fbfcfe; display: grid; grid-template-columns: repeat(4, 34px); grid-auto-rows: 20px; gap: 8px 9px; padding: 4px 0 0 3px; overflow: hidden; }
.swgrid i { display: block; background: #f7f8fa; border: 1px solid #cfd3d8; border-radius: 3px; box-shadow: 3px 3px 0 #a6a6a6; width: 34px; height: 20px; }
.swv { position: absolute; right: 0; top: 0; width: 17px; height: 84px; }
.swv u { display: block; width: 2px; height: 17px; background: #8c8c8c; margin: 17px 0 0 7px; }
.swh { position: absolute; left: 0; bottom: 0; width: 100%; height: 14px; }
.swh u { display: block; position: absolute; left: 143px; top: 8px; width: 17px; height: 2px; background: #8c8c8c; }
.form { display: flex; flex-direction: column; padding: 16px 0 0 5px; color: #1a1a1a; font-size: 12px; }
.row { display: flex; align-items: center; }
.row label { width: 38px; flex: none; line-height: 20px; }
.inp { width: 111px; height: 20px; border: 1px solid #f2f6fd; border-radius: 1px; }
.r2 { margin-top: 11px; }
.colorbtn { width: 45px; height: 19px; margin-left: 2px; background: #eef3fb; border: 1px solid #f4f7fc; border-radius: 3px; display: flex; align-items: center; padding: 0 0 0 2px; }
.colorbtn span { width: 31px; height: 14px; border: 1px solid #000; background: #fff; font: 8px/12px "Liberation Sans", sans-serif; text-align: center; color: #111; }
.colorbtn i { margin-left: 3px; width: 0; height: 0; border: 3px solid transparent; border-top: 4px solid #000; border-bottom: 0; }
.r3 { margin-top: 10px; }
.linebtn { width: 68px; height: 24px; background: #eaf1fb; border: 1px solid #9db0c8; border-radius: 2px; display: flex; align-items: center; padding-left: 1px; }
.linebtn span { width: 49px; height: 18px; background: #fff; border: 1px solid #000; display: flex; align-items: center; padding: 0 2px; outline: 1px solid #c5d8f2; }
.linebtn b { display: block; width: 100%; height: 3px; background: #000; }
.linebtn i, .sel1 i { width: 6px; height: 6px; border-right: 1px solid #555; border-bottom: 1px solid #555; transform: rotate(45deg); margin: -2px 0 0 9px; }
.r4 { margin-top: 7px; }
.sel1 { width: 111px; height: 20px; background: #f6f9fe; display: flex; align-items: center; padding-left: 3px; border-radius: 1px; box-shadow: 0 1px 0 #b8c6da; }
.sel1 span, .sel2 span { flex: 1; color: #222; font-size: 12px; }
.sel1 i { margin: -2px 8px 0 0; }
.r5 { margin-top: 13px; }
.sel2 { width: 111px; height: 20px; background: #f6f9fe; display: flex; align-items: center; padding-left: 3px; border-radius: 3px; box-shadow: 0 1px 0 #b8c6da; }
.sel2 i { width: 9px; height: 14px; border-left: 1px solid #333; position: relative; margin-right: 1px; }
.sel2 i::after { content: ""; position: absolute; left: 2px; top: 5px; border: 3px solid transparent; border-top: 4px solid #000; border-bottom: 0; }
.radios { display: flex; margin-top: 12px; margin-left: -2px; width: 190px; overflow: hidden; height: 20px; align-items: center; }
.rd { width: 48px; display: flex; align-items: center; flex: none; overflow: hidden; }
.rd i { width: 13px; height: 13px; flex: none; border-radius: 50%; border: 1px solid #555; background: #eef2f8; margin-right: 2px; }
.rd span { white-space: nowrap; font-size: 12px; letter-spacing: -.4px; width: 30px; overflow: hidden; }
.rd:last-child { margin-left: 2px; }
.r6 { margin-top: 7px; }
.r6 label { width: 43px; }
.angle { width: 58px; height: 22px; border: 1px solid #f2f6fd; border-bottom-color: #a6b8d2; border-right-color: #c7d6ec; padding: 0 2px; font: 11px/20px "Liberation Sans", sans-serif; color: #222; background: #cfe0f8; }
.r6 sup { margin: 0 0 4px 9px; font: 12px/12px "Liberation Sans", sans-serif; color: #222; }
.propfill { flex: 1; min-height: 0; }
.proptabsb { height: 25px; flex: none; background: #bfdbff; margin-left: -3px; border-top: 1px solid #a8c4e8; border-bottom: 1px solid #6e86aa; display: flex; align-items: center; padding-left: 6px; gap: 5px; color: #1d4f9f; font-size: 13px; }
.ptb { display: flex; align-items: center; gap: 2px; height: 20px; padding: 0 2px; white-space: nowrap; line-height: 16px; }
.ptb span { padding-bottom: 3px; }
.ptb.act { background: linear-gradient(#e8f0fc, #c8dcf8); border: 1px solid #a6c0e4; border-radius: 3px; }
.ptb svg { flex: none; }

/* bottom bar */
.bottombar { height: 34px; flex: none; display: flex; padding-top: 2px; background: linear-gradient(#c8dcf6, #b2cdf2 30%, #b5cff3); border-top: 1px solid #9fb6d6; }
.b { width: 40px; height: 32px; flex: none; border-right: 1px solid #8fb2e2; background: linear-gradient(#dbe8fb 0, #cfe1f9 45%, #b5cff5 50%, #c3d9f8 100%); display: flex; align-items: center; justify-content: center; }
.b.o { background: linear-gradient(#fbe0ba 0, #ffc27a 42%, #ffb14f 55%, #ffe6a0 100%); }
.b:nth-child(19) { border-radius: 0 3px 3px 0; }

/* overlays */
.logo { position: absolute; left: 2px; top: 0; z-index: 5; width: 40px; height: 40px; }
.logotext { font: italic bold 14px "Liberation Sans", Arial, sans-serif; fill: #1f6fc0; text-anchor: middle; letter-spacing: -.5px; }
.handle { position: absolute; left: 0; top: 89px; width: 10px; height: 36px; background: #2e3b4c; border-radius: 0 3px 5px 0; z-index: 4; }
.handle::after { content: ""; position: absolute; left: 0; top: 36px; width: 3px; height: 687px; background: #33435a; }
.watermark { position: absolute; left: 1175px; top: 764px; z-index: 6; pointer-events: none; color: rgba(110, 110, 115, .55); }
.watermark p { margin: 0; white-space: nowrap; }
.w1 { font-size: 20px; line-height: 28px; letter-spacing: .3px; }
.w2 { font-size: 14px; line-height: 20px; margin-top: 1px !important; }
```
